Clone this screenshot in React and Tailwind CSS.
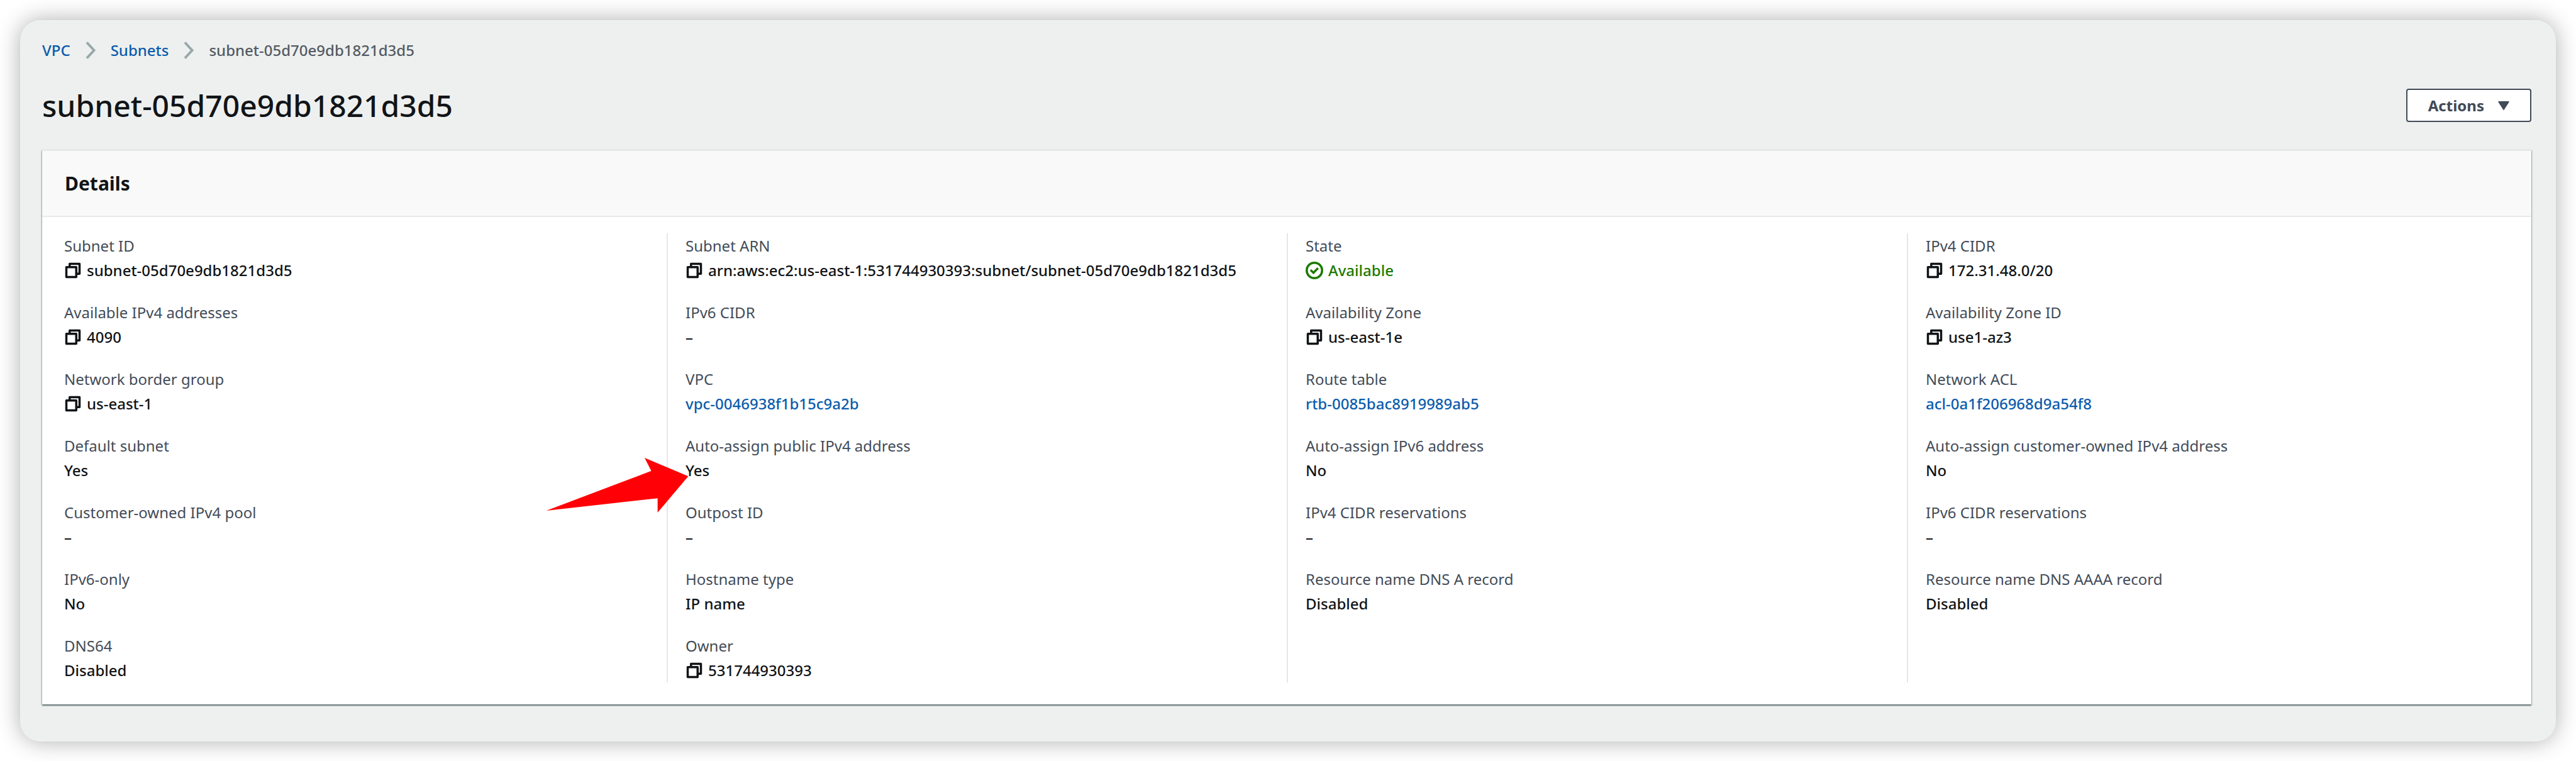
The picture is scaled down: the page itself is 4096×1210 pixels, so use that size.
function CopyIcon() {
  return (
    <svg viewBox="0 0 16 16" className="size-7" fill="none" stroke="currentColor" strokeWidth="2" strokeLinejoin="round" aria-hidden="true">
      <path d="M2 5h9v9H2z" />
      <path d="M5 5V2h9v9h-3" />
    </svg>
  );
}

function CheckIcon() {
  return (
    <svg viewBox="0 0 16 16" className="size-7 shrink-0" fill="none" stroke="currentColor" strokeWidth="2" aria-hidden="true">
      <circle cx="8" cy="8" r="7" />
      <path d="M4.500 7.600l2.600 2.500 4.200-4.200" />
    </svg>
  );
}

function Chevron() {
  return (
    <svg viewBox="0 0 16 28" className="h-7 w-4 text-[#98a8a8]" fill="none" stroke="currentColor" strokeWidth="4" aria-hidden="true">
      <path d="M2 1.500L13.500 14 2 26.500" />
    </svg>
  );
}

function Arrow() {
  return (
    <svg
      viewBox="0 0 257 99"
      className="pointer-events-none absolute top-0 -left-[222px] h-[87px] w-[227px]"
      fill="#ff0006"
      aria-hidden="true"
    >
      <path d="M0 95.500L190 23.700 178 0 257 33.300 201.500 99V73z" />
    </svg>
  );
}

const columns = [
  [
    { label: "Subnet ID", value: "subnet-05d70e9db1821d3d5", kind: "copy" },
    { label: "Available IPv4 addresses", value: "4090", kind: "copy" },
    { label: "Network border group", value: "us-east-1", kind: "copy" },
    { label: "Default subnet", value: "Yes" },
    { label: "Customer-owned IPv4 pool", value: "–" },
    { label: "IPv6-only", value: "No" },
    { label: "DNS64", value: "Disabled" },
  ],
  [
    { label: "Subnet ARN", value: "arn:aws:ec2:us-east-1:531744930393:subnet/subnet-05d70e9db1821d3d5", kind: "copy" },
    { label: "IPv6 CIDR", value: "–" },
    { label: "VPC", value: "vpc-0046938f1b15c9a2b", kind: "link" },
    { label: "Auto-assign public IPv4 address", value: "Yes", arrow: true },
    { label: "Outpost ID", value: "–" },
    { label: "Hostname type", value: "IP name" },
    { label: "Owner", value: "531744930393", kind: "copy" },
  ],
  [
    { label: "State", value: "Available", kind: "status" },
    { label: "Availability Zone", value: "us-east-1e", kind: "copy" },
    { label: "Route table", value: "rtb-0085bac8919989ab5", kind: "link" },
    { label: "Auto-assign IPv6 address", value: "No" },
    { label: "IPv4 CIDR reservations", value: "–" },
    { label: "Resource name DNS A record", value: "Disabled" },
  ],
  [
    { label: "IPv4 CIDR", value: "172.31.48.0/20", kind: "copy" },
    { label: "Availability Zone ID", value: "use1-az3", kind: "copy" },
    { label: "Network ACL", value: "acl-0a1f206968d9a54f8", kind: "link" },
    { label: "Auto-assign customer-owned IPv4 address", value: "No" },
    { label: "IPv6 CIDR reservations", value: "–" },
    { label: "Resource name DNS AAAA record", value: "Disabled" },
  ],
];

function Value({ item }) {
  if (item.kind === "copy") {
    return (
      <span className="flex items-center gap-2">
        <button type="button" aria-label={`Copy ${item.label}`}>
          <CopyIcon />
        </button>
        {item.value}
      </span>
    );
  }
  if (item.kind === "link") {
    return <a href="#" className="text-[#0b5cad]">{item.value}</a>;
  }
  if (item.kind === "status") {
    return (
      <span className="flex items-center gap-2 text-[#1d7a02]">
        <CheckIcon />
        {item.value}
      </span>
    );
  }
  return item.value;
}

export default function App() {
  return (
    <div className="bg-white p-8 font-['Noto_Sans',sans-serif] text-[24px] leading-[39px] text-[#111417]">
      <main className="rounded-[32px] bg-[#eef0ef] pt-7 pr-[39px] pb-[59px] pl-[35px] shadow-[0_0_36px_rgba(0,0,0,0.32)]">
        <nav aria-label="Breadcrumb">
          <ol className="flex items-center gap-6 font-medium text-[#545b64]">
            <li><a href="#" className="text-[#0b5cad]">VPC</a></li>
            <li><Chevron /></li>
            <li><a href="#" className="text-[#0b5cad]">Subnets</a></li>
            <li><Chevron /></li>
            <li>subnet-05d70e9db1821d3d5</li>
          </ol>
        </nav>

        <div className="mt-[42px] flex items-center justify-between">
          <h1 className="text-[48px] leading-[53px] font-medium">subnet-05d70e9db1821d3d5</h1>
          <button
            type="button"
            className="flex h-[53px] items-center gap-[22px] rounded-[4px] border-2 border-[#414a56] bg-white px-[33px] font-bold text-[#414a56]"
          >
            Actions
            <svg viewBox="0 0 20 16" className="h-[14px] w-[18px]" fill="currentColor" stroke="currentColor" strokeWidth="2" strokeLinejoin="round" aria-hidden="true">
              <path d="M1 1h18L10 15z" />
            </svg>
          </button>
        </div>

        <section className="mt-11 border-t-2 border-[#e3e8e8] bg-white shadow-[0_2px_2px_rgba(0,28,36,0.5),1px_1px_2px_rgba(0,28,36,0.2),-1px_1px_2px_rgba(0,28,36,0.2)]">
          <header className="border-b-2 border-[#e6eaea] bg-[#f9f9f9] px-9 py-8">
            <h2 className="text-[30px] font-bold">Details</h2>
          </header>
          <div className="grid grid-cols-4 px-[7px] pt-[26px] pb-[35px]">
            {columns.map((items, i) => (
              <dl
                key={i}
                className="flex flex-col gap-7 border-l-2 border-[#e3e8e8] pl-7 first:border-l-0"
              >
                {items.map((item) => (
                  <div key={item.label}>
                    <dt className="text-[#434c58]">{item.label}</dt>
                    <dd className="relative font-medium">
                      <Value item={item} />
                      {item.arrow && <Arrow />}
                    </dd>
                  </div>
                ))}
              </dl>
            ))}
          </div>
        </section>
      </main>
    </div>
  );
}
